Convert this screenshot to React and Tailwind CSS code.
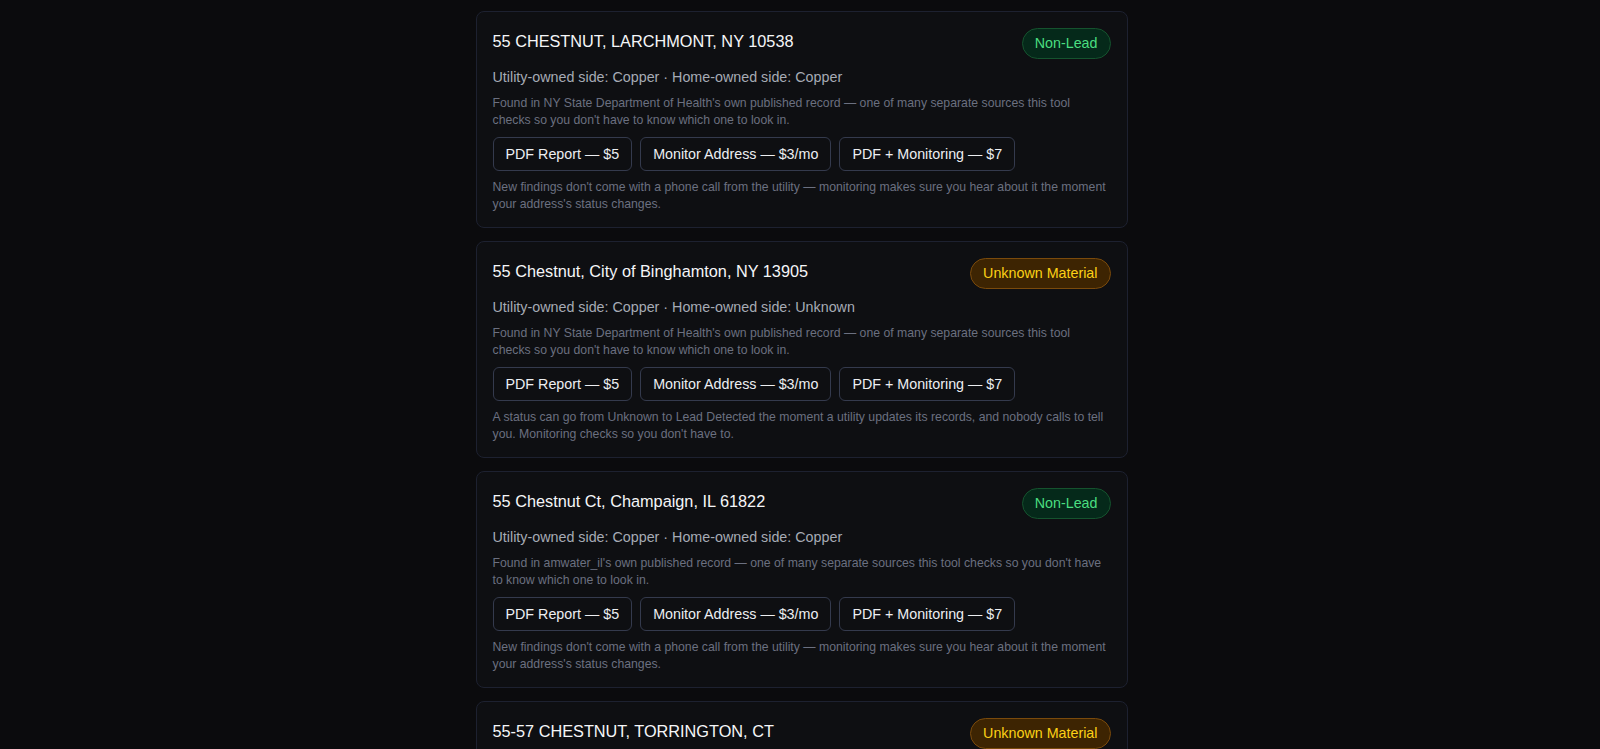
import React from "react";

const cards = [
  {
    title: "55 CHESTNUT, LARCHMONT, NY 10538",
    status: "lead-free",
    utility: "Copper",
    home: "Copper",
    source: "NY State Department of Health",
    note: "New findings don't come with a phone call from the utility — monitoring makes sure you hear about it the moment your address's status changes.",
  },
  {
    title: "55 Chestnut, City of Binghamton, NY 13905",
    status: "unknown",
    utility: "Copper",
    home: "Unknown",
    source: "NY State Department of Health",
    note: "A status can go from Unknown to Lead Detected the moment a utility updates its records, and nobody calls to tell you. Monitoring checks so you don't have to.",
  },
  {
    title: "55 Chestnut Ct, Champaign, IL 61822",
    status: "lead-free",
    utility: "Copper",
    home: "Copper",
    source: "amwater_il",
    note: "New findings don't come with a phone call from the utility — monitoring makes sure you hear about it the moment your address's status changes.",
  },
  {
    title: "55-57 CHESTNUT, TORRINGTON, CT",
    status: "unknown",
    utility: "Unknown",
    home: "Unknown",
    source: "Connecticut Department of Public Health",
    note: "A status can go from Unknown to Lead Detected the moment a utility updates its records, and nobody calls to tell you. Monitoring checks so you don't have to.",
  },
];

function Badge({ status }) {
  if (status === "unknown") {
    return (
      <span className="shrink-0 rounded-full border border-[#7a4a0c] bg-[#3d2402] px-3 py-[5px] text-[14.3px] leading-[19px] text-[#fcd116]">
        Unknown Material
      </span>
    );
  }
  return (
    <span className="shrink-0 rounded-full border border-[#15532e] bg-[#05291a] px-3 py-[5px] text-[14.3px] leading-[19px] text-[#4ade80]">
      Non-Lead
    </span>
  );
}

function Btn({ children }) {
  return (
    <button className="rounded-md border border-[#343a4d] bg-transparent px-3 py-[6px] text-[14.3px] leading-[20px] text-[#eceef1]">
      {children}
    </button>
  );
}

function Card({ c }) {
  return (
    <div className="rounded-lg border border-[#1d2130] bg-[#0e0f12] px-4 pt-4 pb-[15px]">
      <div className="flex items-start justify-between gap-4">
        <h3 className="mt-[1px] text-[16.3px] leading-[24px] font-normal text-[#f5f6f8]">{c.title}</h3>
        <Badge status={c.status} />
      </div>
      <div className="mt-[8px] text-[14.3px] leading-[20px] text-[#a6abb5]">
        Utility-owned side: {c.utility} · Home-owned side: {c.home}
      </div>
      <p className="mt-2 text-[12.25px] leading-[16.5px] text-[#6b7080]">
        Found in {c.source}'s own published record — one of many separate sources this tool checks so you don't have to know which one to look in.
      </p>
      <div className="mt-[9px] flex gap-2">
        <Btn>PDF Report — $5</Btn>
        <Btn>Monitor Address — $3/mo</Btn>
        <Btn>PDF + Monitoring — $7</Btn>
      </div>
      <p className="mt-[8px] text-[12.25px] leading-[16.5px] text-[#6b7080]">{c.note}</p>
    </div>
  );
}

export default function App() {
  return (
    <div
      className="min-h-screen bg-[#0b0b0d] pt-[11px] pl-[3px]"
      style={{ fontFamily: '"Liberation Sans", Arial, sans-serif' }}
    >
      <div className="mx-auto flex w-[652px] flex-col gap-[13px]">
        {cards.map((c, i) => (
          <Card key={i} c={c} />
        ))}
      </div>
    </div>
  );
}
